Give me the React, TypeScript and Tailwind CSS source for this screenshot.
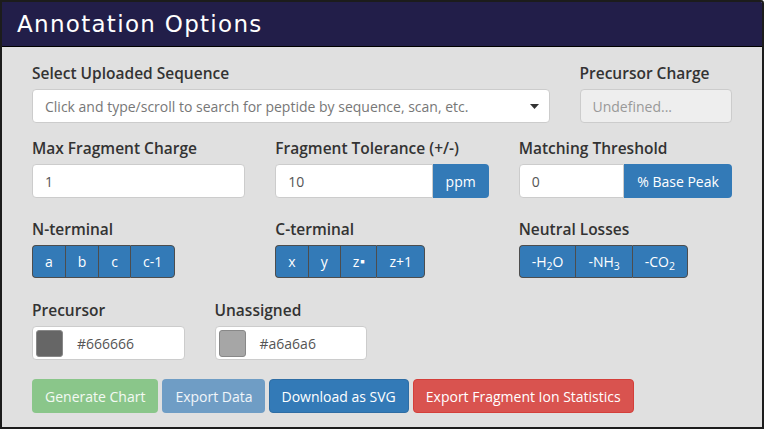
import { ReactNode } from 'react';

const Label = ({ children }: { children: ReactNode }) => (
  <label className="block text-[15.5px] leading-[21px] font-semibold text-[#333] mb-[5px]">
    {children}
  </label>
);

const GroupButton = ({ children, first, last }: { children: ReactNode, first?: boolean, last?: boolean }) => (
  <button
    className={`h-[33px] px-[12px] bg-[#337ab7] text-white text-[14px] border-[#4d4d4d] border-y ${first ? 'border-l rounded-l-[4px]' : 'border-l'} ${last ? 'border-r rounded-r-[4px]' : ''}`}
  >
    {children}
  </button>
);

const ColorInput = ({ color, label }: { color: string, label: string }) => (
  <div className="flex items-center h-[34px] bg-white border border-[#ccc] rounded-[4px] pl-[3px]">
    <span className="w-[27px] h-[27px] rounded-[3px] border border-[#888]" style={{ backgroundColor: color }} />
    <span className="ml-[14px] text-[14px] text-[#555]">{label}</span>
  </div>
);

const App = () => {
  return (
    <div className="w-[764px] h-[429px] border-2 border-[#1c1c1c] rounded-tr-[3px] bg-[#e0e0e0] font-['Open_Sans',sans-serif] overflow-hidden">
      <div className="h-[45px] bg-[#221e49] border-b border-black flex items-center pl-[15px]">
        <h2 className="text-white text-[23px] tracking-[1.3px] font-['DejaVu_Sans',sans-serif]">Annotation Options</h2>
      </div>

      <div className="px-[30px] pt-[16px]">
        <div className="grid grid-cols-12 gap-x-[30px]">
          <div className="col-span-9 mb-[15px]">
            <Label>Select Uploaded Sequence</Label>
            <div className="flex items-center justify-between h-[34px] bg-white border border-[#ccc] rounded-[4px] pl-[12px] pr-[10px]">
              <span className="text-[14px] text-[#777]">Click and type/scroll to search for peptide by sequence, scan, etc.</span>
              <svg width="9" height="5" viewBox="0 0 9 5"><path d="M0 0h9L4.5 5z" fill="#333" /></svg>
            </div>
          </div>
          <div className="col-span-3 mb-[15px]">
            <Label>Precursor Charge</Label>
            <div className="flex items-center h-[34px] bg-[#eee] border border-[#ccc] rounded-[4px] pl-[12px]">
              <span className="text-[14px] text-[#999]">Undefined...</span>
            </div>
          </div>

          <div className="col-span-4 mb-[21px]">
            <Label>Max Fragment Charge</Label>
            <div className="flex items-center h-[34px] bg-white border border-[#ccc] rounded-[4px] pl-[12px]">
              <span className="text-[14px] text-[#555]">1</span>
            </div>
          </div>
          <div className="col-span-4 mb-[21px]">
            <Label>Fragment Tolerance (+/-)</Label>
            <div className="flex h-[34px]">
              <div className="flex items-center flex-1 bg-white border border-[#ccc] rounded-l-[4px] pl-[12px]">
                <span className="text-[14px] text-[#555]">10</span>
              </div>
              <span className="flex items-center w-[56px] justify-center bg-[#337ab7] text-white text-[14px] rounded-r-[4px]">ppm</span>
            </div>
          </div>
          <div className="col-span-4 mb-[21px]">
            <Label>Matching Threshold</Label>
            <div className="flex h-[34px]">
              <div className="flex items-center flex-1 bg-white border border-[#ccc] rounded-l-[4px] pl-[12px]">
                <span className="text-[14px] text-[#555]">0</span>
              </div>
              <span className="flex items-center w-[108px] justify-center bg-[#337ab7] text-white text-[14px] rounded-r-[4px]">% Base Peak</span>
            </div>
          </div>

          <div className="col-span-4 mb-[22px]">
            <Label>N-terminal</Label>
            <div className="flex">
              <GroupButton first>a</GroupButton>
              <GroupButton>b</GroupButton>
              <GroupButton>c</GroupButton>
              <GroupButton last>c-1</GroupButton>
            </div>
          </div>
          <div className="col-span-4 mb-[22px]">
            <Label>C-terminal</Label>
            <div className="flex">
              <GroupButton first>x</GroupButton>
              <GroupButton>y</GroupButton>
              <GroupButton>z<span className="text-[7px] align-[3px] ml-[1px]">&#9632;</span></GroupButton>
              <GroupButton last>z+1</GroupButton>
            </div>
          </div>
          <div className="col-span-4 mb-[22px]">
            <Label>Neutral Losses</Label>
            <div className="flex">
              <GroupButton first>-H<sub>2</sub>O</GroupButton>
              <GroupButton>-NH<sub>3</sub></GroupButton>
              <GroupButton last>-CO<sub>2</sub></GroupButton>
            </div>
          </div>

          <div className="col-span-3 mb-[19px]">
            <Label>Precursor</Label>
            <ColorInput color="#666666" label="#666666" />
          </div>
          <div className="col-span-3 mb-[19px]">
            <Label>Unassigned</Label>
            <ColorInput color="#a6a6a6" label="#a6a6a6" />
          </div>
        </div>

        <div className="flex gap-[4px]">
          <button className="h-[34px] px-[12px] rounded-[4px] bg-[#8ac68a] border border-transparent text-white/90 text-[14px]">Generate Chart</button>
          <button className="h-[34px] pl-[12px] pr-[11px] rounded-[4px] bg-[#6f9dc5] border border-transparent text-white/90 text-[14px]">Export Data</button>
          <button className="h-[34px] px-[12px] rounded-[4px] bg-[#337ab7] border border-[#2e6da4] text-white text-[14px]">Download as SVG</button>
          <button className="h-[34px] px-[12px] rounded-[4px] bg-[#d9534f] border border-[#d43f3a] text-white text-[14px]">Export Fragment Ion Statistics</button>
        </div>
      </div>
    </div>
  );
};

export default App;
